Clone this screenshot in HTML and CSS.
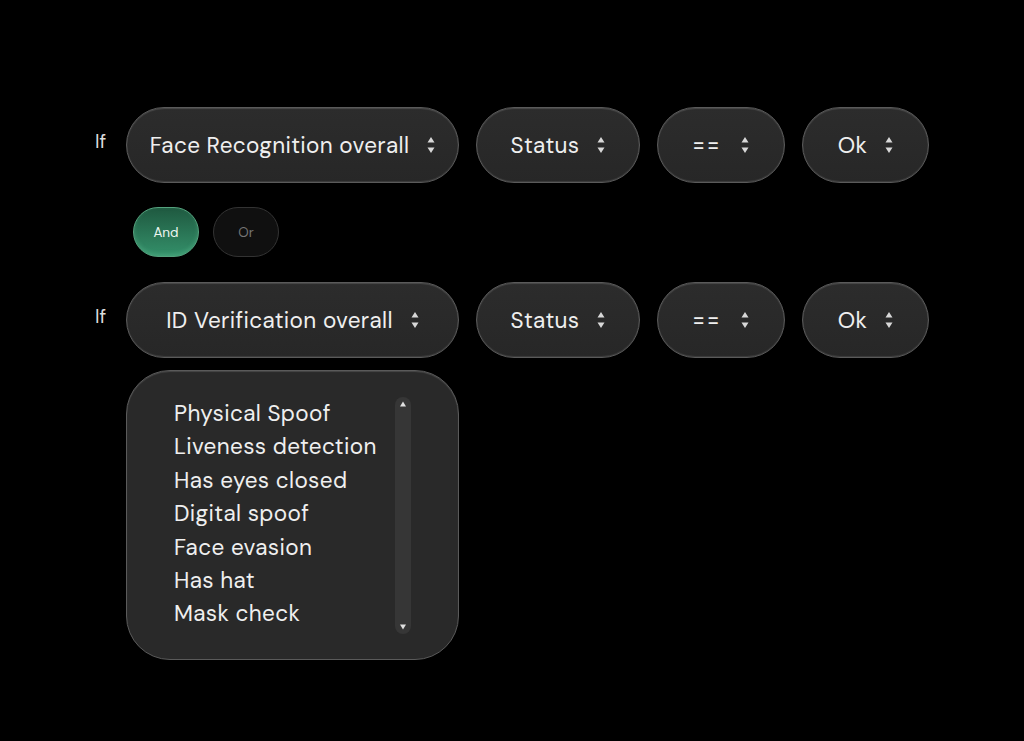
FILE: index.html
```html
<!DOCTYPE html>
<html lang="en">
<head>
<meta charset="utf-8" />
<title>Rule builder</title>
<link rel="stylesheet" href="styles.css">
</head>
<body>

<main class="builder">
	<div class="rule">
		<span class="if">If</span>
		<div class="select w-source"><span>Face Recognition overall</span><svg class="updown" viewBox="0 0 8 18"><path d="M4 1 L7.5 6.5 H0.5 Z M4 17 L7.5 11.5 H0.5 Z"/></svg></div>
		<div class="select w-field"><span>Status</span><svg class="updown" viewBox="0 0 8 18"><path d="M4 1 L7.5 6.5 H0.5 Z M4 17 L7.5 11.5 H0.5 Z"/></svg></div>
		<div class="select w-op"><span>==</span><svg class="updown" viewBox="0 0 8 18"><path d="M4 1 L7.5 6.5 H0.5 Z M4 17 L7.5 11.5 H0.5 Z"/></svg></div>
		<div class="select w-value"><span>Ok</span><svg class="updown" viewBox="0 0 8 18"><path d="M4 1 L7.5 6.5 H0.5 Z M4 17 L7.5 11.5 H0.5 Z"/></svg></div>
	</div>

	<div class="logic">
		<button class="toggle on">And</button>
		<button class="toggle">Or</button>
	</div>

	<div class="rule">
		<span class="if">If</span>
		<div class="select w-source"><span>ID Verification overall</span><svg class="updown" viewBox="0 0 8 18"><path d="M4 1 L7.5 6.5 H0.5 Z M4 17 L7.5 11.5 H0.5 Z"/></svg></div>
		<div class="select w-field"><span>Status</span><svg class="updown" viewBox="0 0 8 18"><path d="M4 1 L7.5 6.5 H0.5 Z M4 17 L7.5 11.5 H0.5 Z"/></svg></div>
		<div class="select w-op"><span>==</span><svg class="updown" viewBox="0 0 8 18"><path d="M4 1 L7.5 6.5 H0.5 Z M4 17 L7.5 11.5 H0.5 Z"/></svg></div>
		<div class="select w-value"><span>Ok</span><svg class="updown" viewBox="0 0 8 18"><path d="M4 1 L7.5 6.5 H0.5 Z M4 17 L7.5 11.5 H0.5 Z"/></svg></div>
	</div>

	<div class="dropdown">
		<ul class="options">
			<li>Physical Spoof</li>
			<li>Liveness detection</li>
			<li>Has eyes closed</li>
			<li>Digital spoof</li>
			<li>Face evasion</li>
			<li>Has hat</li>
			<li>Mask check</li>
		</ul>
		<div class="scrollbar">
			<svg viewBox="0 0 8 6"><path d="M4 0.5 L7 5.5 H1 Z"/></svg>
			<svg viewBox="0 0 8 6"><path d="M4 5.5 L7 0.5 H1 Z"/></svg>
		</div>
	</div>
</main>

</body>
</html>
```

FILE: styles.css
```css
* {box-sizing: border-box;}
html, body {
	margin: 0;
	background: #000;
}
body {
	width: 1024px;
	height: 741px;
	font-family: "DM Sans", Inter, "Noto Sans", sans-serif;
	color: #ececec;
}
.builder {
	padding: 107px 0 0 95px;
}

/* --------------------------------- */

.rule {
	display: flex;
	align-items: center;
	gap: 17px;
}
.rule .if {
	width: 14px;
	margin-top: -8px;
	font-size: 19.5px;
	color: #dcdcdc;
}
.select {
	display: flex;
	align-items: center;
	justify-content: center;
	gap: 18px;
	height: 76px;
	border-radius: 38px;
	background: linear-gradient(180deg, #2c2c2c, #272727);
	border: 1px solid #5a5a5a;
	box-shadow: inset 0 1px 1px rgba(255,255,255,0.14), inset 0 -1px 1px rgba(255,255,255,0.1);
	font-size: 22.5px;
	letter-spacing: 0.35px;
	color: #efefef;
}
.select .updown {
	width: 8px;
	height: 18px;
	fill: #d8d8d8;
}
.w-source {width: 333px;}
.w-field {width: 164px;}
.w-op {width: 128px;}
.w-value {width: 127px;}
.w-op span {letter-spacing: 2px; margin-right: 2px;}

/* --------------------------------- */

.logic {
	display: flex;
	gap: 14px;
	margin: 24px 0 25px 38px;
}
.toggle {
	width: 66px;
	height: 50px;
	border-radius: 25px;
	font: 13.5px "DM Sans", Inter, "Noto Sans", sans-serif;
	padding: 0;
}
.toggle.on {
	background: linear-gradient(180deg, #1f5940, #34906a);
	border: 1px solid #55a27e;
	box-shadow: inset 0 -2px 4px rgba(120,220,170,0.25);
	color: #eef6f1;
}
.toggle:not(.on) {
	background: #101010;
	border: 1px solid #333;
	color: #757575;
}

/* --------------------------------- */

.dropdown {
	display: flex;
	justify-content: space-between;
	width: 333px;
	height: 290px;
	margin: 12px 0 0 31px;
	padding: 26px 48px 0 47px;
	border-radius: 44px;
	background: #292929;
	border: 1px solid #5a5a5a;
	box-shadow: inset 0 1px 1px rgba(255,255,255,0.14);
}
.options {
	list-style: none;
	margin: 0;
	padding: 0;
	font-size: 22.5px;
	line-height: 33.4px;
	letter-spacing: 0.35px;
	color: #efefef;
}
.scrollbar {
	display: flex;
	flex-direction: column;
	justify-content: space-between;
	align-items: center;
	width: 16px;
	height: 237px;
	margin-right: -1px;
	padding: 4px 0;
	border-radius: 8px;
	background: #363636;
}
.scrollbar svg {
	width: 8px;
	height: 6px;
	fill: #e0e0e0;
}
```
